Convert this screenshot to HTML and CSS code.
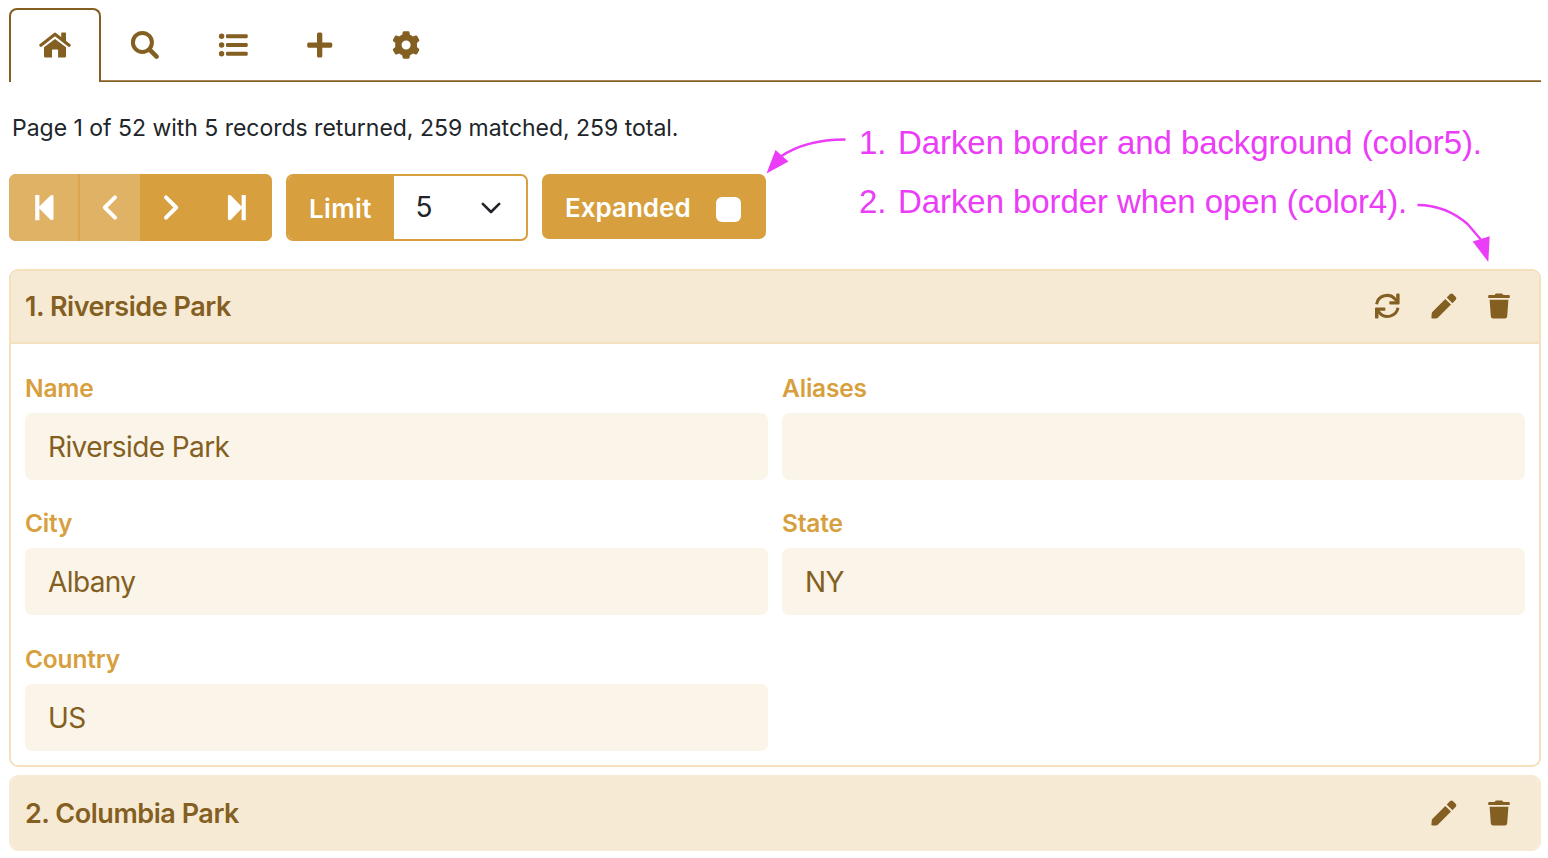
FILE: index.html
```html
<!DOCTYPE html>
<html lang="en">
<head>
<meta charset="utf-8">
<title>Parks</title>
<link rel="stylesheet" href="styles.css">
</head>
<body>
<svg class="defs" width="0" height="0">
  <symbol id="pencil" viewBox="0 0 26 26"><path d="M1.300 18.900 14.3 5.9 20 11.6 7.1 24.500 Q6 25.4 5 25.4L1.4 25.6Q.3 25.6.4 24.5L.7 21Q.7 19.7 1.3 18.900ZM15.700 4.500 19.1 1.100Q20.5 0 21.900 1.100L24.8 4Q26 5.3 24.8 6.7L21.4 10.200Z"/></symbol>
  <symbol id="trash" viewBox="0 0 22 26"><path d="M7 1.4Q7.4.5 8.4.5H13.6Q14.6.5 15 1.4L15.3 2.1H20.8Q21.8 2.1 21.8 3.1V4.2Q21.8 5.1 20.8 5.1H1.2Q.2 5.1.2 4.2V3.1Q.2 2.1 1.2 2.1H6.7ZM1.6 6.8H20.4L19.2 23.2Q19 25.5 16.8 25.5H5.2Q3 25.5 2.8 23.2Z"/></symbol>
</svg>
<nav class="tabs">
  <a class="tab tab-home"><svg width="32" height="28" viewBox="39 31 32 28"><path class="stroke" d="M40.9 45.2 55 34.2 69.1 45.2" stroke-width="3.2"/><path d="M61.2 33.3Q61.2 32.5 62 32.5H65.2Q66 32.5 66 33.3V42L61.2 38.2ZM55 38.9 66 47.3V56.2Q66 57.6 64.6 57.6H58.1V50.3Q58.1 49.4 57.2 49.4H52.9Q52 49.4 52 50.3V57.6H45.4Q44 57.6 44 56.2V47.3Z"/></svg></a>
  <a class="tab tab-mid"><svg width="30" height="30" viewBox="130 30 30 30"><circle class="stroke" cx="142.4" cy="42.4" r="9.5" stroke-width="4"/><path class="stroke" d="M149.6 49.6 156.6 56.6" stroke-width="4.6"/></svg></a>
  <a class="tab tab-mid"><svg width="30" height="26" viewBox="218 32 30 26"><g><circle cx="221.6" cy="36.3" r="2.7"/><circle cx="221.6" cy="45" r="2.7"/><circle cx="221.6" cy="53.7" r="2.7"/><rect x="226" y="34.3" width="21.7" height="4" rx="1.2"/><rect x="226" y="43" width="21.7" height="4" rx="1.2"/><rect x="226" y="51.7" width="21.7" height="4" rx="1.2"/></g></svg></a>
  <a class="tab tab-end"><svg width="26" height="26" viewBox="307 32 26 26"><path d="M317 34Q317 32.4 318.6 32.4H320.8Q322.3 32.4 322.3 34V42.4H330.7Q332.3 42.4 332.3 44V46Q332.3 47.7 330.7 47.7H322.3V56Q322.3 57.6 320.8 57.6H318.6Q317 57.6 317 56V47.7H308.7Q307.2 47.7 307.2 46V44Q307.2 42.4 308.7 42.4H317Z"/></svg></a>
  <a class="tab tab-end"><svg width="28" height="28" viewBox="392 31 28 28"><path fill-rule="evenodd" d="M402.7 32.3Q402.9 31.2 404 31.2H408.2Q409.3 31.2 409.5 32.3L410 34.8Q411.6 35.4 413 36.5L415.6 35.6Q416.7 35.2 417.3 36.2L419.1 39.4Q419.7 40.5 418.9 41.2L416.9 43Q417.2 45 416.9 47L418.9 48.8Q419.7 49.5 419.1 50.6L417.3 53.8Q416.7 54.8 415.6 54.4L413 53.5Q411.6 54.6 410 55.2L409.5 57.7Q409.3 58.8 408.2 58.8H404Q402.9 58.8 402.7 57.7L402.2 55.2Q400.6 54.6 399.2 53.5L396.6 54.4Q395.5 54.8 394.9 53.8L393.1 50.6Q392.5 49.5 393.3 48.8L395.3 47Q395 45 395.3 43L393.3 41.2Q392.5 40.5 393.1 39.4L394.9 36.2Q395.5 35.2 396.6 35.6L399.2 36.5Q400.6 35.4 402.2 34.8ZM406.1 40.5A4.5 4.5 0 1 0 406.1 49.5 4.5 4.5 0 1 0 406.1 40.5Z"/></svg></a>
</nav>

<p class="summary">Page 1 of 52 with 5 records returned, 259 matched, 259 total.</p>

<div class="toolbar">
  <div class="pager">
    <button class="pg pg-first faded"><svg width="20" height="28" viewBox="34 194 20 28"><path d="M35.2 195H39.4V206.5L50.2 195.8Q51.3 194.7 52.7 195Q53.5 195.2 53.5 196.6V218.6Q53.5 219.9 52.7 220.1Q51.3 220.4 50.2 219.4L39.4 208.6V220.2H35.2Z"/></svg></button>
    <button class="pg pg-prev faded"><svg width="18" height="28" viewBox="101 194 18 28"><path class="stroke" d="M115 197.4 104.8 207.5 115 217.6" stroke-width="4"/></svg></button>
    <button class="pg pg-next"><svg width="18" height="28" viewBox="162 194 18 28"><path class="stroke" d="M166 197.4 176.2 207.5 166 217.6" stroke-width="4"/></svg></button>
    <button class="pg pg-last"><svg width="20" height="28" viewBox="227 194 20 28"><path d="M245.8 195H241.6V206.5L231.2 195.8Q230.1 194.7 228.7 195Q227.9 195.2 227.9 196.6V218.6Q227.9 219.9 228.7 220.1Q230.1 220.4 231.2 219.4L241.6 208.6V220.2H245.8Z"/></svg></button>
  </div>
  <div class="limit">
    <span class="limit-label">Limit</span>
    <span class="limit-value"><span>5</span><svg width="22" height="14" viewBox="480 200 22 14"><path class="stroke" d="M482.8 202.8 491 211 499.2 202.8" stroke-width="2.6"/></svg></span>
  </div>
  <label class="expanded"><span class="expanded-text">Expanded</span><span class="box"></span></label>
</div>

<section class="card">
  <header class="card-head">
    <h2>1. Riverside Park</h2>
    <div class="actions">
      <svg width="26" height="26" viewBox="1374 293 26 26"><g class="stroke" stroke-width="3"><path d="M1376.6 304.2A10.6 10.6 0 0 1 1395.2 299.3L1397.3 301.5" stroke-linecap="butt"/><path d="M1398 307.8A10.6 10.6 0 0 1 1379.5 312.7L1377.4 310.5" stroke-linecap="butt"/></g><path d="M1396.2 294.2Q1396.2 293.4 1397 293.4H1398.7Q1399.6 293.4 1399.6 294.2V303.6Q1399.6 304.5 1398.7 304.5H1390.2Q1389.3 304.5 1389.3 303.6V302.2Q1389.3 301.3 1390.2 301.3H1396.2ZM1378.5 317.8Q1378.5 318.6 1377.7 318.6H1375.9Q1375 318.6 1375 317.8V308.4Q1375 307.5 1375.9 307.5H1384.5Q1385.4 307.5 1385.4 308.4V309.8Q1385.4 310.7 1384.5 310.7H1378.5Z"/></svg>
      <svg width="26" height="26"><use href="#pencil"/></svg>
      <svg width="22" height="26"><use href="#trash"/></svg>
    </div>
  </header>
  <div class="fields">
    <div class="field"><div class="label">Name</div><div class="value">Riverside Park</div></div>
    <div class="field"><div class="label">Aliases</div><div class="value"></div></div>
    <div class="field"><div class="label">City</div><div class="value">Albany</div></div>
    <div class="field"><div class="label">State</div><div class="value">NY</div></div>
    <div class="field"><div class="label">Country</div><div class="value">US</div></div>
  </div>
</section>

<section class="card card-closed">
  <header class="card-head">
    <h2>2. Columbia Park</h2>
    <div class="actions">
      <svg width="26" height="26"><use href="#pencil"/></svg>
      <svg width="22" height="26"><use href="#trash"/></svg>
    </div>
  </header>
</section>

<div class="notes">
  <div class="note"><span class="num">1.</span><span>Darken border and background (color5).</span></div>
  <div class="note"><span class="num">2.</span><span>Darken border when open (color4).</span></div>
</div>
<svg class="arrows" width="1548" height="270" viewBox="0 0 1548 270"><g fill="none" stroke="#eb3cf7" stroke-width="2.4"><path d="M845.5 139.5C822 139.5 798 144.5 780 157"/><path d="M1417.5 205C1440 205 1457 215 1467.5 224Q1471 228 1482 241"/></g><path fill="#eb3cf7" d="M766.5 173.5 775.5 150 788.5 161.5ZM1488.3 262 1472.7 241.5 1489.7 236.3Z"/></svg>
</body>
</html>
```
FILE: styles.css
```css
* { box-sizing: border-box; }
body {
  margin: 0;
  padding: 8px 7px 7px 9px;
  height: 858px;
  overflow: hidden;
  position: relative;
  background: #fff;
  color: #212529;
  font-family: Inter, "Liberation Sans", sans-serif;
}
svg { display: block; fill: currentColor; flex: none; }
.defs { position: absolute; }
.stroke { fill: none; stroke: currentColor; stroke-linecap: round; stroke-linejoin: round; }

.tabs { display: flex; height: 74px; color: #845f22; box-shadow: inset 0 -1.7px #845f22; }
.tab { display: flex; align-items: center; justify-content: center; height: 74px; width: 88px; }
.tab-home { width: 92px; padding-bottom: 2px; border: 2px solid #845f22; border-bottom: 0; border-radius: 8px 8px 0 0; background: #fff; }
.tab-end { width: 86px; }

.summary { margin: 31px 0 0 3px; height: 30px; line-height: 30px; font-size: 23px; white-space: nowrap; letter-spacing: -0.02px; }

.toolbar { display: flex; align-items: flex-start; gap: 14px; margin-top: 31px; height: 67px; font-size: 26px; }
.pager { display: flex; height: 67px; width: 263px; border-radius: 7px; overflow: hidden; background: #d79f3e; }
.pg { border: 0; padding: 0; margin: 0; background: #d79f3e; color: #fff; height: 67px; display: flex; align-items: center; justify-content: center; }
.pg.faded { background: #e0b266; }
.pg-first { width: 71px; border-right: 2px solid #dba64c; }
.pg-prev { width: 60px; }
.pg-next { width: 62px; }
.pg-last { width: 70px; }
.limit { display: flex; width: 242px; height: 67px; border: 2px solid #d79f3e; border-radius: 7px; overflow: hidden; }
.limit-label { width: 106px; padding-left: 21px; background: #d79f3e; color: #fff; font-weight: 600; line-height: 65px; letter-spacing: 0.4px; }
.limit-value { flex: 1; display: flex; align-items: center; justify-content: space-between; padding: 0 24px 0 21.5px; font-size: 28px; line-height: 67px; }
.expanded { display: flex; align-items: center; justify-content: space-between; width: 224px; height: 65px; padding: 0 25px 0 23px; border-radius: 7px; background: #d79f3e; color: #fff; font-weight: 600; }
.expanded-text { line-height: 67px; padding-top: 1px; }
.box { width: 25px; height: 25px; border-radius: 6px; background: #fff; margin-top: 6px; }

.card { margin-top: 28px; height: 498px; border: 2px solid #f4e0bd; border-radius: 9px; overflow: hidden; }
.card-head { display: flex; align-items: center; justify-content: space-between; height: 73px; padding: 0 29px 0 14px; background: #f7ead5; border-bottom: 2px solid #f4e0bd; color: #845f22; }
.card-head h2 { margin: 0; font-size: 27px; font-weight: 600; letter-spacing: -0.46px; white-space: nowrap; }
.actions { display: flex; align-items: center; gap: 31px; padding-bottom: 1px; }
.card-closed { margin-top: 8px; height: 76px; border-color: #f7ead5; }
.card-closed .card-head { border-bottom: 0; height: 72px; }
.fields { display: grid; grid-template-columns: 743px 743px; grid-auto-rows: 107px; gap: 28.4px 14px; padding: 29px 14px 0; }
.label { height: 40px; line-height: 31px; color: #d79f3e; font-size: 24.5px; font-weight: 600; letter-spacing: -0.18px; }
.value { height: 67px; line-height: 69px; padding-left: 23px; border-radius: 7px; background: #fbf4e8; color: #845f22; font-size: 28px; letter-spacing: -0.6px; }

.notes { position: absolute; left: 859px; top: 113px; color: #eb3cf7; font-family: "Liberation Sans", Arial, sans-serif; font-size: 33px; letter-spacing: -0.08px; }
.note { display: flex; height: 59px; line-height: 60px; white-space: nowrap; }
.num { width: 39px; }
.arrows { position: absolute; left: 0; top: 0; pointer-events: none; }
```
